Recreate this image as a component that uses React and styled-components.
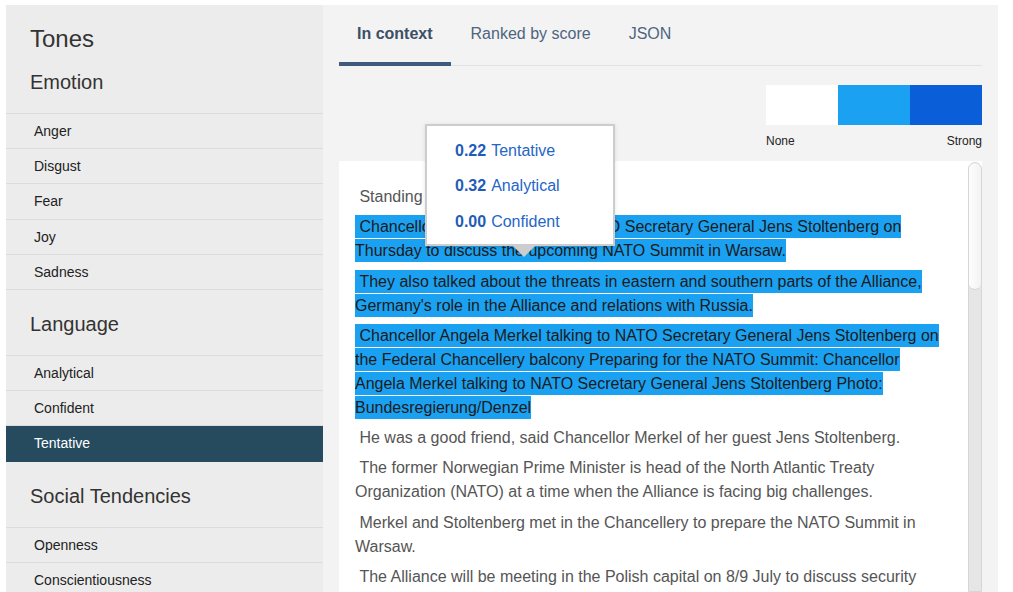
import React from 'react';
import styled, { createGlobalStyle } from 'styled-components';

const GlobalStyle = createGlobalStyle`
  html, body {
    margin: 0;
    padding: 0;
    background: #fff;
    overflow: hidden;
  }
  body {
    font-family: "Liberation Sans", Arial, Helvetica, sans-serif;
  }
`;

const PageWrapper = styled.div`
  display: flex;
  padding: 5px 15px 0 6px;
  height: 587px;
  overflow: hidden;
`;

const Sidebar = styled.aside`
  width: 317px;
  flex-shrink: 0;
  background: #ececec;
  color: #333;
`;

const Title = styled.h1`
  margin: 0 0 -5px 0;
  padding: 20px 24px 0;
  font-size: 24px;
  line-height: 28px;
  font-weight: 400;
  color: #333;
`;

const SectionHeading = styled.h2`
  margin: 22px 0 19px;
  padding: 0 24px;
  font-size: 20px;
  line-height: 24px;
  font-weight: 400;
  color: #333;
`;

const ToneList = styled.ul`
  list-style: none;
  margin: 0;
  padding: 0;
  border-top: 1px solid #dcdcdc;
`;

const ToneItem = styled.li`
  box-sizing: border-box;
  height: 35.2px;
  display: flex;
  align-items: center;
  padding: 0 28px;
  font-size: 14px;
  color: ${(p) => (p.$active ? '#fff' : '#222')};
  background: ${(p) => (p.$active ? '#264b5f' : 'transparent')};
  border-bottom: 1px solid ${(p) => (p.$active ? '#264b5f' : '#dcdcdc')};
`;

const Main = styled.main`
  position: relative;
  width: 675px;
  flex-shrink: 0;
  box-sizing: border-box;
  padding: 0 16px;
  background: #f3f3f3;
  display: flex;
  flex-direction: column;
`;

const TabBar = styled.nav`
  display: flex;
  border-bottom: 1px solid #e2e2e2;
`;

const Tab = styled.a`
  display: block;
  padding: 19px 18px 18px;
  margin-right: 2px;
  font-size: 16px;
  line-height: 20px;
  font-weight: ${(p) => (p.$active ? 700 : 400)};
  color: ${(p) => (p.$active ? '#3b4f66' : '#4d6580')};
  text-decoration: none;
  border-bottom: 4px solid ${(p) => (p.$active ? '#3e5a7c' : 'transparent')};
  margin-bottom: -1px;
`;

const Legend = styled.div`
  display: flex;
  flex-direction: column;
  align-items: flex-end;
  margin-top: 19px;
`;

const LegendScale = styled.div`
  display: flex;
  width: 216px;
`;

const Swatch = styled.div`
  flex: 1;
  height: 40px;
  background: ${(p) => p.$color};
`;

const LegendLabels = styled.div`
  display: flex;
  justify-content: space-between;
  width: 216px;
  margin-top: 9px;
  font-size: 12px;
  line-height: 14px;
  color: #222;
`;

const TextPanel = styled.div`
  margin-top: 13px;
  flex: 1;
  min-height: 0;
  display: flex;
  background: #fff;
  overflow: hidden;
`;

const TextBody = styled.div`
  flex: 1;
  padding: 24px 23px 0 16px;
`;

const ScrollTrack = styled.div`
  width: 14px;
  flex-shrink: 0;
  box-sizing: border-box;
  margin-top: 1px;
  background: #e6e6e6;
  border: 1px solid #d6d6d6;
  border-radius: 7px 7px 0 0;
  overflow: hidden;
`;

const ScrollThumb = styled.div`
  height: 126px;
  background: linear-gradient(to right, #fdfdfd, #f3f3f3);
  border-bottom: 1px solid #d6d6d6;
  border-radius: 6px;
`;

const Paragraph = styled.p`
  margin: 0 0 6.3px;
  font-size: 16px;
  line-height: 24px;
  color: #555;
`;

const Highlight = styled.span`
  background: #1ba1f1;
  color: #1b1b1b;
  padding: 3px 0;
`;

const Tooltip = styled.div`
  position: absolute;
  left: 102px;
  top: 119px;
  width: 186px;
  height: 118px;
  background: #fff;
  border: 2px solid #cdcdcd;
  box-shadow: 0 1px 4px rgba(0, 0, 0, 0.12);
  z-index: 2;

  &::after {
    content: '';
    position: absolute;
    left: 86px;
    bottom: -13px;
    border-left: 11px solid transparent;
    border-right: 11px solid transparent;
    border-top: 11px solid #cdcdcd;
  }
`;

const TooltipList = styled.ul`
  list-style: none;
  margin: 0;
  padding: 7px 0 0 28px;
`;

const TooltipRow = styled.li`
  height: 35.5px;
  display: flex;
  align-items: center;
  font-size: 16px;
  color: #2566c6;
`;

const Score = styled.span`
  font-weight: 700;
  color: #1f5cb8;
  margin-right: 5px;
`;

const nb = '\u00a0';

const emotion = ['Anger', 'Disgust', 'Fear', 'Joy', 'Sadness'];
const language = ['Analytical', 'Confident', 'Tentative'];
const social = ['Openness', 'Conscientiousness'];

const tabs = ['In context', 'Ranked by score', 'JSON'];

const scores = [
  { value: '0.22', name: 'Tentative' },
  { value: '0.32', name: 'Analytical' },
  { value: '0.00', name: 'Confident' },
];

const paragraphs = [
  { text: 'Standing firm together', hl: false },
  { text: 'Chancellor Angela Merkel met NATO Secretary General Jens Stoltenberg on Thursday to discuss the upcoming NATO Summit in Warsaw. ', hl: true },
  { text: "They also talked about the threats in eastern and southern parts of the Alliance, Germany's role in the Alliance and relations with Russia. ", hl: true },
  { text: 'Chancellor Angela Merkel talking to NATO Secretary General Jens Stoltenberg on the Federal Chancellery balcony Preparing for the NATO Summit: Chancellor Angela Merkel talking to NATO Secretary General Jens Stoltenberg Photo: Bundesregierung/Denzel ', hl: true },
  { text: 'He was a good friend, said Chancellor Merkel of her guest Jens Stoltenberg.', hl: false },
  { text: 'The former Norwegian Prime Minister is head of the North Atlantic Treaty Organization (NATO) at a time when the Alliance is facing big challenges.', hl: false },
  { text: 'Merkel and Stoltenberg met in the Chancellery to prepare the NATO Summit in Warsaw.', hl: false },
  { text: 'The Alliance will be meeting in the Polish capital on 8/9 July to discuss security', hl: false },
];

const Sidebarlist = ({ items, active }) => (
  <ToneList>
    {items.map((item) => (
      <ToneItem key={item} $active={item === active}>{item}</ToneItem>
    ))}
  </ToneList>
);

class App extends React.Component {
  render() {
    return (
      <PageWrapper>
        <GlobalStyle />
        <Sidebar>
          <Title>Tones</Title>
          <SectionHeading>Emotion</SectionHeading>
          <Sidebarlist items={emotion} />
          <SectionHeading>Language</SectionHeading>
          <Sidebarlist items={language} active="Tentative" />
          <SectionHeading>Social Tendencies</SectionHeading>
          <Sidebarlist items={social} />
        </Sidebar>
        <Main>
          <TabBar>
            {tabs.map((t, i) => (
              <Tab key={t} href="#" $active={i === 0}>{t}</Tab>
            ))}
          </TabBar>
          <Legend>
            <LegendScale>
              <Swatch $color="#ffffff" />
              <Swatch $color="#1ba1f1" />
              <Swatch $color="#0a5fd8" />
            </LegendScale>
            <LegendLabels>
              <span>None</span>
              <span>Strong</span>
            </LegendLabels>
          </Legend>
          <TextPanel>
            <TextBody>
              {paragraphs.map((p, i) => (
                <Paragraph key={i}>
                  {p.hl ? <Highlight>{nb + p.text}</Highlight> : nb + p.text}
                </Paragraph>
              ))}
            </TextBody>
            <ScrollTrack>
              <ScrollThumb />
            </ScrollTrack>
          </TextPanel>
          <Tooltip>
            <TooltipList>
              {scores.map((s) => (
                <TooltipRow key={s.name}>
                  <Score>{s.value}</Score>
                  {s.name}
                </TooltipRow>
              ))}
            </TooltipList>
          </Tooltip>
        </Main>
      </PageWrapper>
    );
  }
}

export default App;
